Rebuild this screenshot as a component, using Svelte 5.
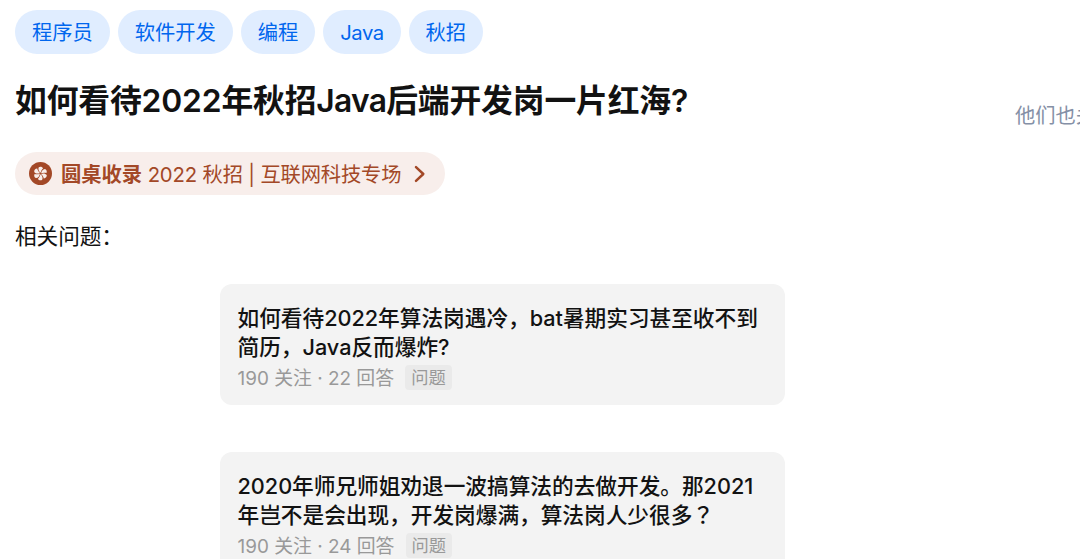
<script>
    const tags = ['程序员', '软件开发', '编程', 'Java', '秋招'];

    // Related questions, titles are split into the lines shown on the card
    const questions = [
        {
            id: 1,
            lines: ['如何看待2022年算法岗遇冷，bat暑期实习甚至收不到', '简历，Java反而爆炸?'],
            follows: 190,
            answers: 22,
        },
        {
            id: 2,
            lines: ['2020年师兄师姐劝退一波搞算法的去做开发。那2021', '年岂不是会出现，开发岗爆满，算法岗人少很多'],
            mark: '？',
            follows: 190,
            answers: 24,
        },
    ];

    const petals = [0, 60, 120, 180, 240, 300];

    const isLatin = (text) => /^[A-Za-z]+$/.test(text);
</script>

<div class="page">
    <main class="content">
        <div class="tags">
            {#each tags as tag}
                <span class="tag" class:latin={isLatin(tag)}>{tag}</span>
            {/each}
        </div>

        <h1 class="title">如何看待2022年秋招<span class="word">Java</span>后端开发岗一片红海?</h1>

        <div class="roundtable">
            <svg class="flower" viewBox="0 0 24 24">
                <circle cx="12" cy="12" r="12" fill="#a34827" />
                {#each petals as angle}
                    <path
                        d="M12.2 11.3C10.3 10 9.2 7.6 10.2 5.5C11.5 4.4 14 4.9 14.7 6.5C13.4 7.7 12.5 9.2 12.2 11.3Z"
                        fill="#f8eeeb"
                        transform="rotate({angle} 12 12)"
                    />
                {/each}
            </svg>
            <strong>圆桌收录</strong>
            <span class="topic">2022 秋招 | 互联网科技专场</span>
            <svg class="arrow" viewBox="0 0 12 18">
                <path d="M2 2.2L9.3 9L2 15.8" fill="none" stroke="#a34827" stroke-width="2.5" stroke-linecap="round" stroke-linejoin="round" />
            </svg>
        </div>

        <p class="related">相关问题：</p>

        <div class="cards">
            {#each questions as question (question.id)}
                <div class="card">
                    <div class="card-title">
                        {#each question.lines as line, i}
                            <div>{line}{#if question.mark && i === question.lines.length - 1}<span class="mark">{question.mark}</span>{/if}</div>
                        {/each}
                    </div>
                    <div class="meta">
                        <span>{question.follows} 关注 · {question.answers} 回答</span>
                        <span class="badge">问题</span>
                    </div>
                </div>
            {/each}
        </div>
    </main>

    <aside class="followers">他们也关注了该问题</aside>
</div>

<style>
    :global(body) {
        background: #fff;
        overflow: hidden;
    }

    .page {
        display: flex;
        width: 1080px;
        height: 559px;
        overflow: hidden;
        box-sizing: border-box;
        padding: 10px 0 0 15px;
        color: #121212;
        font-family: Inter, "Noto Sans CJK SC", sans-serif;
        white-space: nowrap;
    }

    .content {
        flex: 0 0 1000px;
    }

    .tags {
        display: flex;
        gap: 7.9px;
    }

    .tag {
        height: 43.5px;
        padding: 0 17px;
        border-radius: 22px;
        background: #e0edff;
        color: #0066ee;
        font-size: 20.3px;
        line-height: 45px;
    }

    .tag.latin {
        letter-spacing: -0.5px;
    }

    .title {
        margin: 25.5px 0 0;
        font-size: 31.8px;
        font-weight: 600;
        letter-spacing: -0.15px;
        line-height: 43px;
    }

    .title .word {
        letter-spacing: -0.75px;
    }

    .roundtable {
        display: flex;
        align-items: center;
        width: 430px;
        height: 43px;
        margin-top: 30px;
        box-sizing: border-box;
        padding-left: 14px;
        border-radius: 22px;
        background: #f8eeeb;
        color: #a34827;
        font-size: 20.3px;
    }

    .flower {
        width: 23px;
        height: 23px;
        margin-right: 9px;
    }

    .roundtable strong {
        margin-right: 5.5px;
        padding-bottom: 2px;
        font-weight: 700;
    }

    .topic {
        padding-bottom: 2px;
        letter-spacing: -0.15px;
    }

    .arrow {
        width: 12px;
        height: 18px;
        margin-left: 13px;
    }

    .related {
        margin: 26px 0 0;
        font-size: 21.7px;
        letter-spacing: -0.1px;
        line-height: 31px;
    }

    .cards {
        display: flex;
        flex-direction: column;
        gap: 47px;
        width: 565px;
        margin: 32px 0 0 205px;
    }

    .card {
        height: 121px;
        box-sizing: border-box;
        padding: 20px 18px 0 17.5px;
        border-radius: 12px;
        background: #f3f3f3;
    }

    .card-title {
        font-size: 21.7px;
        font-weight: 500;
        letter-spacing: -0.03px;
        line-height: 29px;
    }

    /* full-width question mark, centred in its own box */
    .mark {
        font-family: "Noto Sans CJK TC", sans-serif;
        line-height: 1;
    }

    .meta {
        display: flex;
        align-items: center;
        gap: 11px;
        height: 29px;
        color: #999;
        font-size: 18.9px;
    }

    .badge {
        height: 25px;
        margin-top: 1px;
        padding: 0 6px;
        border-radius: 4px;
        background: #eaeaea;
        font-size: 17.3px;
        line-height: 26px;
    }

    .followers {
        flex: none;
        margin-top: 91px;
        color: #8590a6;
        font-size: 20.3px;
        line-height: 30px;
    }
</style>
